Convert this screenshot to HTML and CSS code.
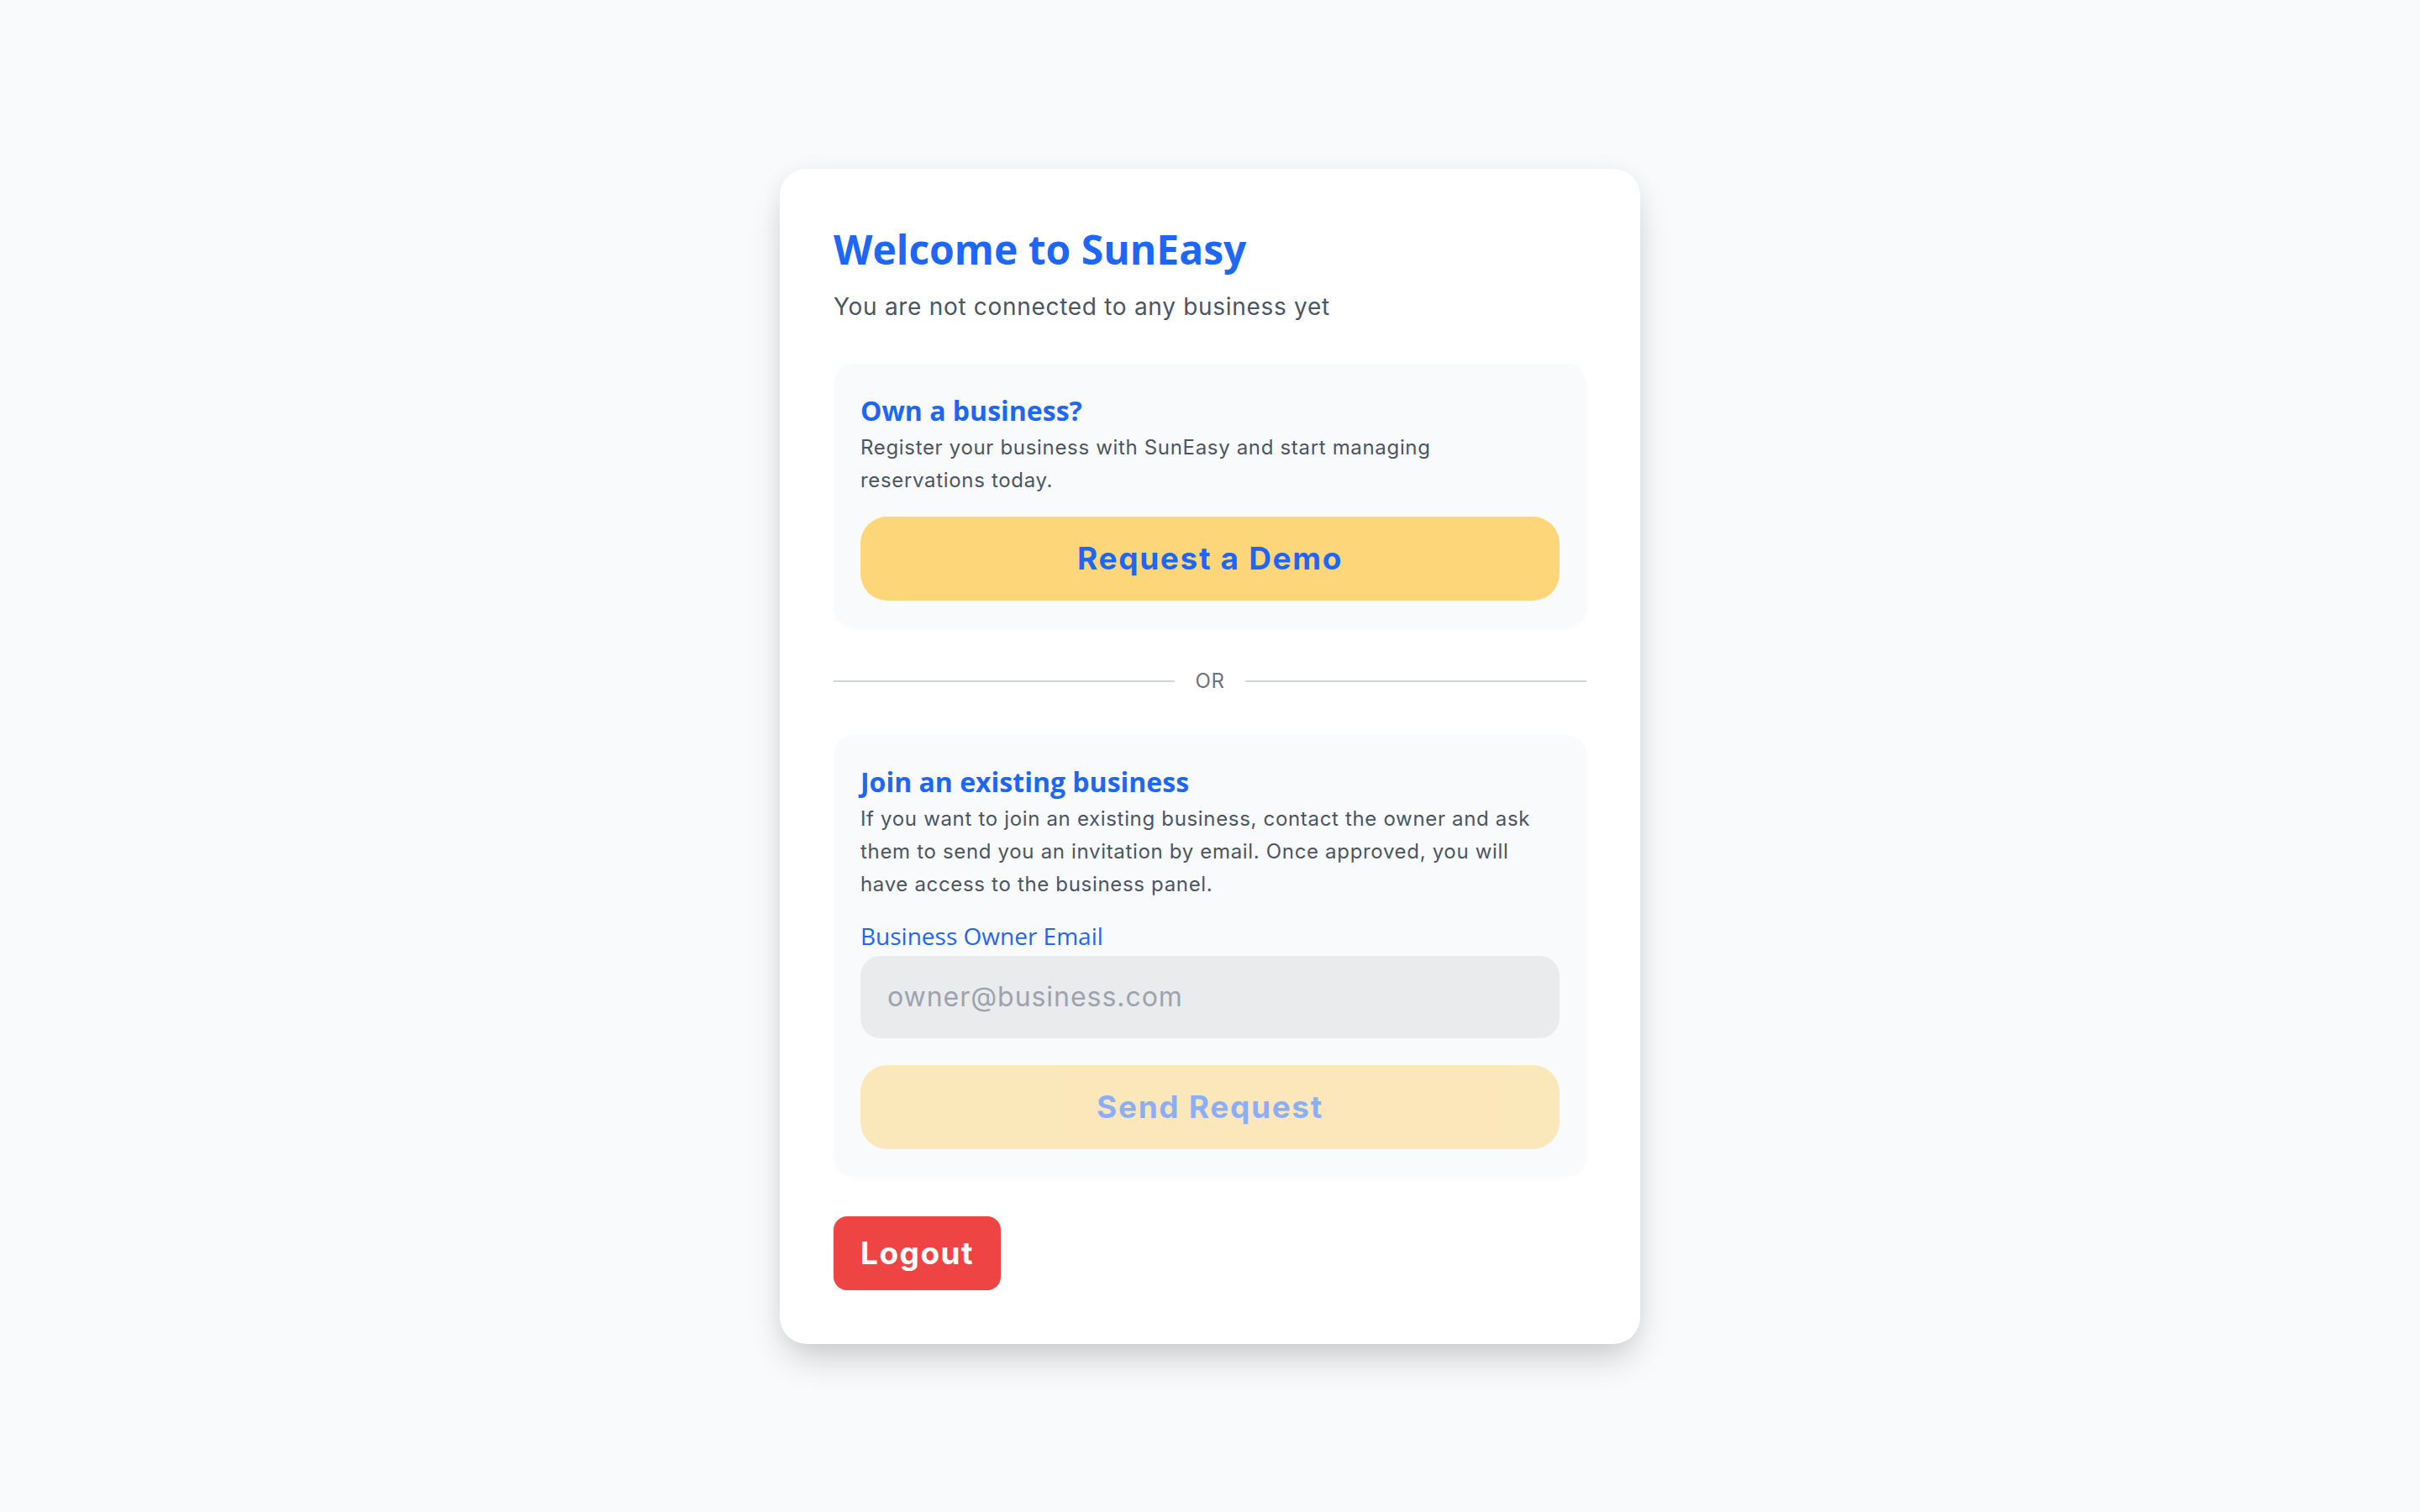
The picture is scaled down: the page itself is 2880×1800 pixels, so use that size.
FILE: index.html
```html
<!DOCTYPE html>
<html lang="en">
<head>
	<meta charset="UTF-8">
	<meta name="viewport" content="width=device-width, initial-scale=1.0">
	<title>SunEasy</title>
	<link rel="stylesheet" href="styles.css">
</head>
<body>
	<main class="page">
		<div class="card">
			<h1 class="title">Welcome to SunEasy</h1>
			<p class="subtitle">You are not connected to any business yet</p>

			<section class="panel">
				<h2 class="panel-title">Own a business?</h2>
				<p class="panel-text">Register your business with SunEasy and start managing<br>reservations today.</p>
				<button class="btn btn-demo" type="button">Request a Demo</button>
			</section>

			<div class="divider"><span>OR</span></div>

			<section class="panel">
				<h2 class="panel-title">Join an existing business</h2>
				<p class="panel-text">If you want to join an existing business, contact the owner and ask<br>them to send you an invitation by email. Once approved, you will<br>have access to the business panel.</p>
				<label class="field-label" for="owner-email">Business Owner Email</label>
				<input class="field" id="owner-email" type="email" placeholder="owner@business.com">
				<button class="btn btn-send" type="button" disabled>Send Request</button>
			</section>

			<button class="logout" type="button">Logout</button>
		</div>
	</main>
</body>
</html>
```

FILE: styles.css
```css
* {
	margin: 0;
	padding: 0;
	box-sizing: border-box;
}
body {
	background-color: #f9fafb;
	font-family: Inter, "Noto Sans", sans-serif;
	color: #4b5563;
}
.page {
	min-height: 100vh;
	display: flex;
	align-items: center;
	justify-content: center;
}
.card {
	width: 1024px;
	padding: 64px;
	background-color: #fff;
	border-radius: 32px;
	box-shadow: 0 22px 44px -8px rgba(0, 0, 0, .2), 0 0 24px rgba(0, 0, 0, .04);
	display: flex;
	flex-direction: column;
	align-items: flex-start;
}
.title {
	font-family: "Open Sans", sans-serif;
	font-size: 48px;
	line-height: 64px;
	font-weight: 700;
	color: #1e66f5;
}
.subtitle {
	margin-top: 16px;
	font-size: 28px;
	line-height: 40px;
	letter-spacing: .025em;
	color: #4b5563;
}
.panel {
	align-self: stretch;
	margin-top: 48px;
	padding: 32px;
	background-color: #f9fafb;
	border-radius: 24px;
	box-shadow: 0 2px 6px rgba(0, 0, 0, .02);
	display: flex;
	flex-direction: column;
}
.panel-title {
	font-family: "Open Sans", sans-serif;
	font-size: 32px;
	line-height: 48px;
	font-weight: 700;
	color: #1e66f5;
}
.panel-text {
	font-size: 24px;
	line-height: 39px;
	letter-spacing: .028em;
	color: #4b5563;
}
.btn {
	margin-top: 24px;
	height: 100px;
	border: 0;
	border-radius: 32px;
	background-color: #fdd679;
	font-family: Inter, "Noto Sans", sans-serif;
	font-size: 37px;
	font-weight: 700;
	letter-spacing: .045em;
	color: #1e66f5;
	cursor: pointer;
}
.btn-send {
	margin-top: 32px;
}
.btn:disabled {
	opacity: .5;
	cursor: default;
}
.divider {
	align-self: stretch;
	margin-top: 48px;
	display: flex;
	align-items: center;
	font-size: 24px;
	line-height: 32px;
	letter-spacing: .03em;
	color: #6b7280;
}
.divider::before,
.divider::after {
	content: '';
	flex: 1;
	height: 2px;
	background-color: #d1d5db;
}
.divider span {
	padding: 0 24px;
}
.field-label {
	margin-top: 22px;
	font-family: "Open Sans", sans-serif;
	font-size: 28px;
	line-height: 40px;
	color: #1e66f5;
}
.field {
	margin-top: 4px;
	height: 98px;
	padding: 0 32px;
	border: 0;
	border-radius: 24px;
	background-color: #eaebec;
	font-family: Inter, "Noto Sans", sans-serif;
	font-size: 32px;
	letter-spacing: .03em;
	color: #374151;
	outline: none;
}
.field::placeholder {
	color: #9ca3af;
}
.logout {
	margin-top: 48px;
	padding: 16px 32px;
	border: 0;
	border-radius: 16px;
	background-color: #ef4444;
	font-family: Inter, "Noto Sans", sans-serif;
	font-size: 37px;
	line-height: 56px;
	font-weight: 700;
	letter-spacing: .04em;
	color: #fff;
	cursor: pointer;
}
```
